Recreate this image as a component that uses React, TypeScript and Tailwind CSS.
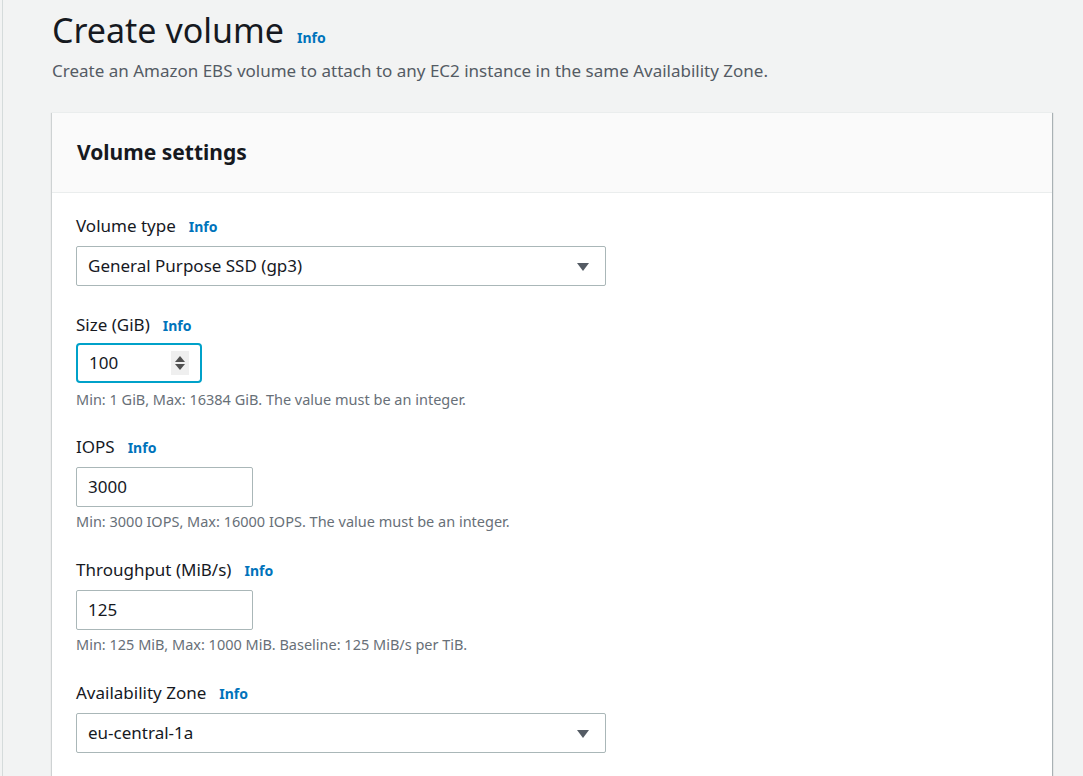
import React from 'react';

const Info = () => (
  <span className="ml-[13px] text-[14px] font-bold text-[#0073bb]">Info</span>
);

const Caret = () => (
  <svg width="14" height="10" viewBox="0 0 14 10" className="absolute right-[15px] top-[15px]">
    <path d="M1 1 L13 1 L7 9 Z" fill="#545b64" />
  </svg>
);

interface FieldProps {
  label: string;
  children: React.ReactNode;
  hint?: string;
  tight?: boolean;
}

const Field: React.FC<FieldProps> = ({ label, children, hint, tight }) => (
  <div className={tight ? 'mb-[27px]' : 'mb-[28px]'}>
    <div className="flex items-baseline h-[22px] text-[17px] text-[#16191f] leading-[22px]">
      {label}
      <Info />
    </div>
    <div className={tight ? 'mt-[7px]' : 'mt-[9px]'}>{children}</div>
    {hint && (
      <div className={`${tight ? 'mt-[6px]' : 'mt-[4px]'} text-[14.5px] leading-[20px] text-[#687078]`}>
        {hint}
      </div>
    )}
  </div>
);

const Select = ({ value }: { value: string }) => (
  <div className="relative w-[530px] h-[40px] border border-[#aab7b8] rounded-[2px] bg-white px-[11px] flex items-center text-[17px] text-[#16191f]">
    {value}
    <Caret />
  </div>
);

const TextInput = ({ value, w }: { value: string; w: string }) => (
  <div className={`${w} h-[40px] border border-[#aab7b8] rounded-[2px] bg-white px-[11px] flex items-center text-[17px] text-[#16191f]`}>
    {value}
  </div>
);

export default function App() {
  return (
    <div
      className="w-[1083px] h-[776px] overflow-hidden bg-[#f2f3f3] flex"
      style={{ fontFamily: '"Noto Sans", "Open Sans", sans-serif' }}
    >
      <div className="ml-[2px] w-px bg-[#d5dbdb]" />
      <div className="pl-[49px] flex-1">
        <div className="pt-[8px] flex items-baseline">
          <h1 className="text-[34px] leading-[44px] text-[#16191f]">Create volume</h1>
          <span className="ml-[13px] text-[14px] font-bold text-[#0073bb]">Info</span>
        </div>
        <p className="mt-[8px] text-[17px] leading-[22px] text-[#545b64]">
          Create an Amazon EBS volume to attach to any EC2 instance in the same Availability Zone.
        </p>
        <div className="mt-[30px] w-[1000px] bg-white shadow-[1px_1px_1px_0_rgba(0,28,36,0.3),-1px_1px_1px_0_rgba(0,28,36,0.15)] border-t border-[#eaeded]">
          <div className="h-[80px] bg-[#fafafa] border-b border-[#eaeded] px-[25px] flex items-center">
            <h2 className="text-[21px] font-bold text-[#16191f]">Volume settings</h2>
          </div>
          <div className="px-[24px] pt-[22px] pb-[20px]">
            <Field label="Volume type">
              <Select value="General Purpose SSD (gp3)" />
            </Field>
            <Field label="Size (GiB)" hint="Min: 1 GiB, Max: 16384 GiB. The value must be an integer." tight>
              <div className="w-[126px] h-[40px] border-2 border-[#00a1c9] rounded-[4px] bg-white pl-[11px] pr-[11px] flex items-center justify-between text-[17px] text-[#16191f]">
                100
                <div className="w-[18px] h-[24px] bg-[#efefef] flex flex-col items-center justify-center gap-[2px]">
                  <svg width="10" height="6" viewBox="0 0 10 6"><path d="M0 6 L5 0 L10 6 Z" fill="#505050" /></svg>
                  <svg width="10" height="6" viewBox="0 0 10 6"><path d="M0 0 L10 0 L5 6 Z" fill="#505050" /></svg>
                </div>
              </div>
            </Field>
            <Field label="IOPS" hint="Min: 3000 IOPS, Max: 16000 IOPS. The value must be an integer.">
              <TextInput value="3000" w="w-[177px]" />
            </Field>
            <Field label="Throughput (MiB/s)" hint="Min: 125 MiB, Max: 1000 MiB. Baseline: 125 MiB/s per TiB.">
              <TextInput value="125" w="w-[177px]" />
            </Field>
            <Field label="Availability Zone">
              <Select value="eu-central-1a" />
            </Field>
          </div>
        </div>
      </div>
    </div>
  );
}
